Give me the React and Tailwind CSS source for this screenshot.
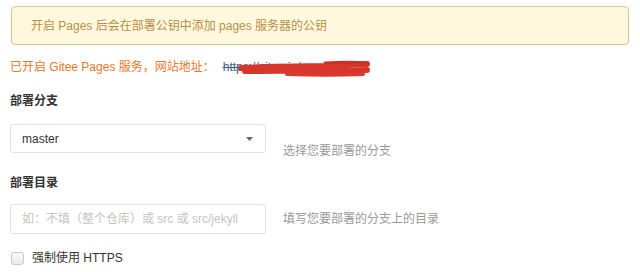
import React from 'react';

const font = { fontFamily: '"Liberation Sans", "Noto Sans CJK SC", sans-serif' };

// red marker scribble hiding the site url
const Scribble = () => (
  <svg
    className="absolute left-[14px] top-[1px]"
    width="134"
    height="20"
    viewBox="0 0 134 20"
    fill="none"
  >
    <path d="M4 9 C30 8 60 7 90 7 C108 6 120 5 130 5" stroke="#d8352b" strokeWidth="6" strokeLinecap="round" />
    <path d="M8 12 C40 12 70 11 100 12 C114 12 124 11 130 11" stroke="#d8352b" strokeWidth="6" strokeLinecap="round" />
    <path d="M50 15 C80 16 100 16 126 15" stroke="#d93a30" strokeWidth="4" strokeLinecap="round" />
    <path d="M88 4 C104 3 118 3 128 4" stroke="#cc3029" strokeWidth="3" strokeLinecap="round" />
  </svg>
);

export default function App() {
  return (
    <div className="w-[640px] h-[272px] bg-white px-[10px] overflow-hidden text-[12px]" style={font}>
      <div className="mt-[6px] ml-px mr-[1px] h-[39px] rounded-[4px] border border-[#d6c592] bg-[#fff8df] flex items-center pl-[19px] text-[#b89044]">
        开启 Pages 后会在部署公钥中添加 pages 服务器的公钥
      </div>

      <div className="mt-[13px] h-[18px] leading-[18px] flex items-center text-[#e8782a]">
        <span>已开启 Gitee Pages 服务，网站地址：</span>
        <span className="relative ml-[8px] text-[#3e5f8a] line-through">
          https://gitee.io/xxxxxxxx
          <Scribble />
        </span>
      </div>

      <div className="mt-4 h-[18px] leading-[18px] font-bold text-[#333]">部署分支</div>

      <div className="mt-[14px] flex items-start">
        <div className="w-[256px] h-[29px] rounded-[3px] border border-[#e2e2e2] flex items-center justify-between pl-[11px] pr-[12px] text-[#333]">
          <span>master</span>
          <svg width="7" height="4" viewBox="0 0 7 4">
            <path d="M0 0 L7 0 L3.5 4 Z" fill="#666" />
          </svg>
        </div>
        <div className="ml-[17px] mt-[18px] leading-[18px] text-[#999]">选择您要部署的分支</div>
      </div>

      <div className="mt-[14px] h-[18px] leading-[18px] font-bold text-[#333]">部署目录</div>

      <div className="mt-3 flex items-center">
        <div className="w-[256px] h-[30px] rounded-[3px] border border-[#e2e2e2] flex items-center pl-[11px] text-[#c4c4c4]">
          如：不填（整个仓库）或 src 或 src/jekyll
        </div>
        <div className="ml-[17px] leading-[18px] text-[#999]">填写您要部署的分支上的目录</div>
      </div>

      <div className="mt-[15px] h-[18px] flex items-center">
        <div className="w-[13px] h-[13px] ml-px rounded-[3px] border border-[#c8c8c8] bg-gradient-to-b from-[#fafafa] to-[#e8e8e8]" />
        <span className="ml-[8px] text-[#333]">强制使用 HTTPS</span>
      </div>
    </div>
  );
}
